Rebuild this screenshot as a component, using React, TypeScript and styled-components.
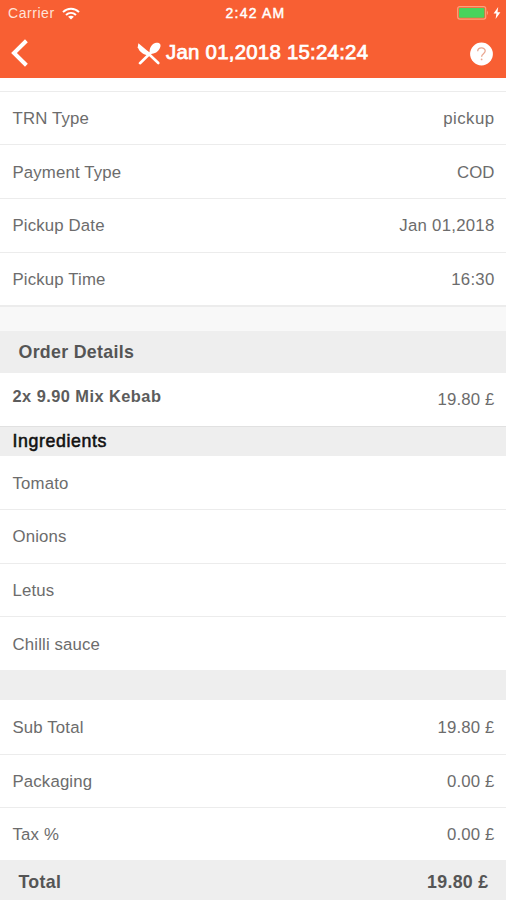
import React from "react";
import styled, { createGlobalStyle } from "styled-components";

const GlobalStyle = createGlobalStyle`
  * { box-sizing: border-box; }
  body {
    margin: 0;
    background: #fff;
    font-family: "Liberation Sans", Arial, sans-serif;
  }
`;

const Screen = styled.main`
  width: 506px;
  height: 900px;
  overflow: hidden;
  display: flex;
  flex-direction: column;
  background: #fff;
`;

const Header = styled.header`
  height: 78.4px;
  flex: none;
  background: #f85f33;
  color: #fff;
`;

const StatusBar = styled.div`
  height: 27px;
  display: grid;
  grid-template-columns: 1fr auto 1fr;
  align-items: center;
  padding: 0 5px 1px 8px;
  font-size: 14px;
`;

const Carrier = styled.div`
  display: flex;
  align-items: center;
  gap: 7px;
  letter-spacing: 0.55px;
  color: #ffe3d8;
`;

const Clock = styled.div`
  font-size: 14px;
  letter-spacing: 1.2px;
  margin-left: 2px;
  -webkit-text-stroke: 0.45px #fff;
`;

const Power = styled.div`
  display: flex;
  justify-content: flex-end;
  align-items: center;
  gap: 4px;
`;

const NavBar = styled.nav`
  height: 51px;
  display: grid;
  grid-template-columns: 137px 1fr 36px;
  align-items: center;
`;

const IconButton = styled.button`
  border: 0;
  padding: 0 0 0 11px;
  background: none;
  display: flex;
`;

const HelpButton = styled(IconButton)`
  padding: 3px 0 0;
`;

const Title = styled.h1`
  margin: 0 0 1px;
  display: flex;
  align-items: center;
  gap: 5px;
  font-size: 20.4px;
  font-weight: 400;
  line-height: 24px;
  letter-spacing: 0.25px;
  white-space: nowrap;
  -webkit-text-stroke: 0.75px #fff;

  svg { margin-top: 2px; }
`;

const Spacer = styled.div<{ $h: number; $bg: string }>`
  height: ${(p) => p.$h}px;
  flex: none;
  background: ${(p) => p.$bg};
`;

const Row = styled.div<{ $h?: number; $top?: string; $drop?: number }>`
  height: ${(p) => p.$h ?? 53.7}px;
  flex: none;
  display: flex;
  justify-content: space-between;
  align-items: center;
  padding: ${(p) => p.$drop ?? 1.8}px 11.5px 0 12.5px;
  border-top: 1.5px solid ${(p) => p.$top ?? "#ececec"};
  background: #fff;
`;

const Text = styled.span<{ $ls?: number }>`
  font-size: 16.8px;
  line-height: 20px;
  letter-spacing: ${(p) => p.$ls ?? 0.15}px;
  color: #6c6c6c;
  white-space: nowrap;
`;

const ItemName = styled(Text)`
  font-size: 16.4px;
  letter-spacing: 0.45px;
  font-weight: 700;
  color: #5c5c5c;
  margin-bottom: 7px;
`;

const Band = styled.div<{ $h: number }>`
  height: ${(p) => p.$h}px;
  flex: none;
  display: flex;
  justify-content: space-between;
  align-items: center;
  padding: 0 17.5px 0 18.5px;
  background: #eee;
  color: #555;
  font-size: 17.8px;
  font-weight: 700;
  line-height: 22px;
  letter-spacing: 0.3px;
`;

const SubBand = styled(Band)`
  padding-left: 12.5px;
  border-top: 1.5px solid #e1e1e1;
  color: #111;
  font-weight: 400;
  letter-spacing: 0.6px;
  -webkit-text-stroke: 0.55px #111;
`;

const details = [
  { label: "TRN Type", value: "pickup", ls: 0.45 },
  { label: "Payment Type", value: "COD", ls: 0.1 },
  { label: "Pickup Date", value: "Jan 01,2018", ls: 0.25 },
  { label: "Pickup Time", value: "16:30", ls: 0.25 },
];

const ingredients = ["Tomato", "Onions", "Letus", "Chilli sauce"];

const totals = [
  { label: "Sub Total", value: "19.80 £" },
  { label: "Packaging", value: "0.00 £" },
  { label: "Tax %", value: "0.00 £" },
];

const WifiIcon = () => (
  <svg width="18" height="13" viewBox="0 0 18 13" fill="none" stroke="#fff" strokeWidth="2">
    <path d="M1 5.1C5.5.7 12.5.7 17 5.1" />
    <path d="M4 8C7 5.2 11 5.2 14 8" />
    <path d="M9 12.6 6.1 9.7C7.8 8.3 10.2 8.3 11.9 9.7Z" fill="#fff" stroke="none" />
  </svg>
);

const BatteryIcon = () => (
  <svg width="32" height="14" viewBox="0 0 32 14">
    <rect x="0.7" y="0.7" width="28" height="12.4" rx="2" fill="none" stroke="#fca27d" strokeWidth="1.2" />
    <rect x="2" y="2" width="25.4" height="9.8" rx="1" fill="#48d35c" />
    <path d="M30 4.6Q32 6.9 30 9.2Z" fill="#fca27d" />
  </svg>
);

const BoltIcon = () => (
  <svg width="8" height="12" viewBox="0 0 8 12">
    <path d="M5.2 0 .6 6.6H3.4L2.6 12 7.4 5.2H4.5Z" fill="#fff" />
  </svg>
);

const BackIcon = () => (
  <svg width="18" height="28" viewBox="0 0 18 28" fill="none" stroke="#fff" strokeWidth="4">
    <path d="M15.4 1.8 3 14 15.4 26.2" />
  </svg>
);

const CutleryIcon = () => (
  <svg width="24" height="23" viewBox="0 0 24 23" fill="none" stroke="#fff">
    <path d="M14.2 10.2 3 21.2" strokeWidth="2.6" strokeLinecap="round" />
    <path d="M13 11.4C11.4 7 14.8 1.4 19 .8 22.8.4 24 2.4 23.4 4.8 22.4 9 17.5 13 13 11.4Z" fill="#fff" stroke="none" />
    <path d="M10 10.2 21.3 21" strokeWidth="2.6" strokeLinecap="round" />
    <path d="M1.4 1.2 12.4 10.6 10 13.2C6 12.4 2.4 9.6.7 5.2Z" fill="#fff" stroke="none" />
  </svg>
);

const HelpIcon = () => (
  <svg width="23" height="24" viewBox="0 0 23 24">
    <circle cx="11.5" cy="12" r="11.4" fill="#fff" />
    <path d="M7.7 9.3C7.8 4.7 15.3 4.9 15.2 9.1 15.1 11.7 11.6 11.7 11.6 14.8" fill="none" stroke="#e9a690" strokeWidth="1.3" />
    <circle cx="11.6" cy="17.4" r="0.9" fill="#e9a690" />
  </svg>
);

export default function App() {
  return (
    <Screen>
      <GlobalStyle />
      <Header>
        <StatusBar>
          <Carrier>
            Carrier
            <WifiIcon />
          </Carrier>
          <Clock>2:42 AM</Clock>
          <Power>
            <BatteryIcon />
            <BoltIcon />
          </Power>
        </StatusBar>
        <NavBar>
          <IconButton aria-label="Back">
            <BackIcon />
          </IconButton>
          <Title>
            <CutleryIcon />
            Jan 01,2018 15:24:24
          </Title>
          <HelpButton aria-label="Help">
            <HelpIcon />
          </HelpButton>
        </NavBar>
      </Header>
      <Spacer $h={12.2} $bg="#fff" />
      {details.map((d) => (
        <Row key={d.label}>
          <Text>{d.label}</Text>
          <Text $ls={d.ls}>{d.value}</Text>
        </Row>
      ))}
      <Spacer $h={1.4} $bg="#ececec" />
      <Spacer $h={24} $bg="#f8f8f8" />
      <Band $h={41.8}>Order Details</Band>
      <Row $h={53.4} $top="#fff" $drop={0}>
        <ItemName>2x 9.90 Mix Kebab</ItemName>
        <Text>19.80 £</Text>
      </Row>
      <SubBand $h={30}>Ingredients</SubBand>
      {ingredients.map((name, i) => (
        <Row key={name} $h={i === 0 ? 53 : 53.7} $top={i === 0 ? "#fff" : undefined}>
          <Text>{name}</Text>
        </Row>
      ))}
      <Spacer $h={30} $bg="#eee" />
      {totals.map((t, i) => (
        <Row key={t.label} $h={i === 2 ? 53 : 53.7} $top={i === 0 ? "#fff" : undefined}>
          <Text>{t.label}</Text>
          <Text>{t.value}</Text>
        </Row>
      ))}
      <Band $h={44}>
        <span>Total</span>
        <span>19.80 £</span>
      </Band>
    </Screen>
  );
}
